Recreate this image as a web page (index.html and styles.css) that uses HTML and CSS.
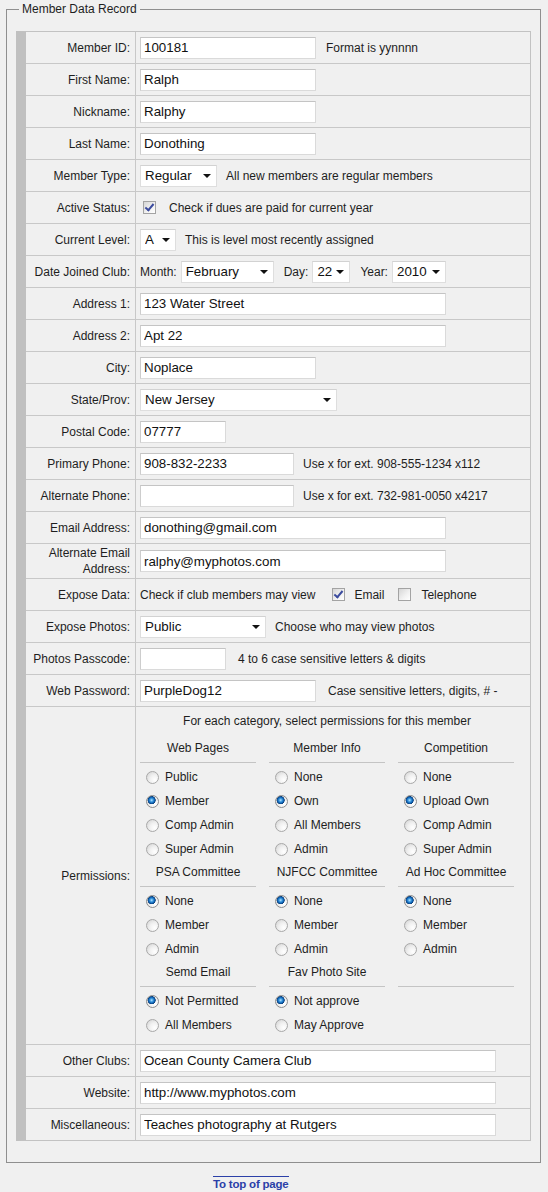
FILE: index.html
```html
<!DOCTYPE html>
<html lang="en">
<head>
<meta charset="utf-8">
<title>Member Data Record</title>
<link rel="stylesheet" href="styles.css">
</head>
<body>
<form class="page">
  <fieldset class="record">
    <legend>Member Data Record</legend>
    <div class="grid">
      <div class="row"><div class="lbl">Member ID:</div><div class="val"><input class="txt w176" value="100181"><span class="hint m10">Format is yynnnn</span></div></div>
      <div class="row"><div class="lbl">First Name:</div><div class="val"><input class="txt w176" value="Ralph"></div></div>
      <div class="row"><div class="lbl">Nickname:</div><div class="val"><input class="txt w176" value="Ralphy"></div></div>
      <div class="row"><div class="lbl">Last Name:</div><div class="val"><input class="txt w176" value="Donothing"></div></div>
      <div class="row"><div class="lbl">Member Type:</div><div class="val"><span class="sel w77"><select><option>Regular</option></select></span><span class="hint m9">All new members are regular members</span></div></div>
      <div class="row"><div class="lbl">Active Status:</div><div class="val"><input type="checkbox" class="chk m3" checked><span class="hint m13">Check if dues are paid for current year</span></div></div>
      <div class="row"><div class="lbl">Current Level:</div><div class="val"><span class="sel w36"><select><option>A</option></select></span><span class="hint m9">This is level most recently assigned</span></div></div>
      <div class="row"><div class="lbl">Date Joined Club:</div><div class="val"><span class="hint">Month:</span><span class="sel w93 m4"><select><option>February</option></select></span><span class="hint m10">Day:</span><span class="sel w38 m4"><select><option>22</option></select></span><span class="hint m10">Year:</span><span class="sel w54 m4"><select><option>2010</option></select></span></div></div>
      <div class="row"><div class="lbl">Address 1:</div><div class="val"><input class="txt w306" value="123 Water Street"></div></div>
      <div class="row"><div class="lbl">Address 2:</div><div class="val"><input class="txt w306" value="Apt 22"></div></div>
      <div class="row"><div class="lbl">City:</div><div class="val"><input class="txt w176" value="Noplace"></div></div>
      <div class="row"><div class="lbl">State/Prov:</div><div class="val"><span class="sel w197"><select><option>New Jersey</option></select></span></div></div>
      <div class="row"><div class="lbl">Postal Code:</div><div class="val"><input class="txt w86" value="07777"></div></div>
      <div class="row"><div class="lbl">Primary Phone:</div><div class="val"><input class="txt w154" value="908-832-2233"><span class="hint m9">Use x for ext. 908-555-1234 x112</span></div></div>
      <div class="row"><div class="lbl">Alternate Phone:</div><div class="val"><input class="txt w154" value=""><span class="hint m9">Use x for ext. 732-981-0050 x4217</span></div></div>
      <div class="row"><div class="lbl">Email Address:</div><div class="val"><input class="txt w306" value="donothing@gmail.com"></div></div>
      <div class="row"><div class="lbl two">Alternate Email<br>Address:</div><div class="val"><input class="txt w306" value="ralphy@myphotos.com"></div></div>
      <div class="row"><div class="lbl">Expose Data:</div><div class="val"><span class="hint">Check if club members may view</span><input type="checkbox" class="chk m17" checked><span class="hint m9">Email</span><input type="checkbox" class="chk m14"><span class="hint m10">Telephone</span></div></div>
      <div class="row"><div class="lbl">Expose Photos:</div><div class="val"><span class="sel w126"><select><option>Public</option></select></span><span class="hint m9">Choose who may view photos</span></div></div>
      <div class="row"><div class="lbl">Photos Passcode:</div><div class="val"><input class="txt w86" value=""><span class="hint m12">4 to 6 case sensitive letters &amp; digits</span></div></div>
      <div class="row"><div class="lbl">Web Password:</div><div class="val"><input class="txt w176" value="PurpleDog12"><span class="hint m12">Case sensitive letters, digits, # -</span></div></div>
      <div class="row"><div class="lbl">Permissions:</div>
        <div class="perm">
          <div class="intro">For each category, select permissions for this member</div>
          <div class="pgrid">
            <div class="group"><div class="ghead">Web Pages</div>
              <label class="opt"><input type="radio" name="web" class="rad">Public</label>
              <label class="opt"><input type="radio" name="web" class="rad" checked>Member</label>
              <label class="opt"><input type="radio" name="web" class="rad">Comp Admin</label>
              <label class="opt"><input type="radio" name="web" class="rad">Super Admin</label>
            </div>
            <div class="group"><div class="ghead">Member Info</div>
              <label class="opt"><input type="radio" name="info" class="rad">None</label>
              <label class="opt"><input type="radio" name="info" class="rad" checked>Own</label>
              <label class="opt"><input type="radio" name="info" class="rad">All Members</label>
              <label class="opt"><input type="radio" name="info" class="rad">Admin</label>
            </div>
            <div class="group"><div class="ghead">Competition</div>
              <label class="opt"><input type="radio" name="comp" class="rad">None</label>
              <label class="opt"><input type="radio" name="comp" class="rad" checked>Upload Own</label>
              <label class="opt"><input type="radio" name="comp" class="rad">Comp Admin</label>
              <label class="opt"><input type="radio" name="comp" class="rad">Super Admin</label>
            </div>
            <div class="group"><div class="ghead">PSA Committee</div>
              <label class="opt"><input type="radio" name="psa" class="rad" checked>None</label>
              <label class="opt"><input type="radio" name="psa" class="rad">Member</label>
              <label class="opt"><input type="radio" name="psa" class="rad">Admin</label>
            </div>
            <div class="group"><div class="ghead">NJFCC Committee</div>
              <label class="opt"><input type="radio" name="njfcc" class="rad" checked>None</label>
              <label class="opt"><input type="radio" name="njfcc" class="rad">Member</label>
              <label class="opt"><input type="radio" name="njfcc" class="rad">Admin</label>
            </div>
            <div class="group"><div class="ghead">Ad Hoc Committee</div>
              <label class="opt"><input type="radio" name="adhoc" class="rad" checked>None</label>
              <label class="opt"><input type="radio" name="adhoc" class="rad">Member</label>
              <label class="opt"><input type="radio" name="adhoc" class="rad">Admin</label>
            </div>
            <div class="group"><div class="ghead">Semd Email</div>
              <label class="opt"><input type="radio" name="send" class="rad" checked>Not Permitted</label>
              <label class="opt"><input type="radio" name="send" class="rad">All Members</label>
            </div>
            <div class="group"><div class="ghead">Fav Photo Site</div>
              <label class="opt"><input type="radio" name="fav" class="rad" checked>Not approve</label>
              <label class="opt"><input type="radio" name="fav" class="rad">May Approve</label>
            </div>
            <div class="group"><div class="ghead">&nbsp;</div></div>
          </div>
        </div>
      </div>
      <div class="row"><div class="lbl">Other Clubs:</div><div class="val"><input class="txt w356" value="Ocean County Camera Club"></div></div>
      <div class="row"><div class="lbl">Website:</div><div class="val"><input class="txt w356" value="http://www.myphotos.com"></div></div>
      <div class="row"><div class="lbl">Miscellaneous:</div><div class="val"><input class="txt w356" value="Teaches photography at Rutgers"></div></div>
    </div>
  </fieldset>
  <div class="totop"><a href="#">To top of page</a></div>
</form>
</body>
</html>
```

FILE: styles.css
```css
html, body {
  margin: 0;
  padding: 0;
  background: #f0f0f0;
}
body {
  font-family: "Liberation Sans", Arial, sans-serif;
  font-size: 12px;
  color: #1e1e1e;
}
.page {
  margin: 0;
  padding: 0;
}
.record {
  margin: 2px 7px 0 6px;
  padding: 15px 9px 21px 9px;
  border: 1px solid #8f8f8f;
  min-width: 0;
}
.record legend {
  margin-left: 3px;
  padding: 0 3px;
  line-height: 14px;
  font-size: 12px;
  color: #1e1e1e;
}
.grid {
  border: 1px solid #c2c2c2;
  border-left: 10px solid #c0c0c0;
}
.row {
  display: grid;
  grid-template-columns: 110px 1fr;
  border-top: 1px solid #c8c8c8;
}
.row:first-child {
  border-top: 0;
}
.lbl {
  box-sizing: border-box;
  border-right: 1px solid #c8c8c8;
  padding: 0 5px 0 0;
  min-height: 31px;
  display: flex;
  align-items: center;
  justify-content: flex-end;
  text-align: right;
  line-height: 16px;
  white-space: nowrap;
}
.lbl.two {
  padding-top: 1px;
  padding-bottom: 1px;
  min-height: 34px;
}
.val {
  display: flex;
  align-items: center;
  padding: 0 4px;
  min-height: 31px;
  white-space: nowrap;
}
.txt {
  box-sizing: border-box;
  height: 22px;
  margin: 0;
  padding: 0 3px;
  border: 1px solid #dadada;
  border-top-color: #c4c4c4;
  border-left-color: #cdcdcd;
  background: #fff;
  font-family: "Liberation Sans", Arial, sans-serif;
  font-size: 13.33px;
  color: #111;
  outline: none;
}
.hint {
  line-height: 16px;
  color: #1e1e1e;
}
.sel {
  position: relative;
  display: inline-block;
  height: 22px;
}
.sel select {
  -webkit-appearance: none;
  appearance: none;
  box-sizing: border-box;
  width: 100%;
  height: 22px;
  margin: 0;
  padding: 0 0 0 4px;
  border: 1px solid #dedede;
  border-top-color: #d2d2d2;
  border-radius: 0;
  background: #fff;
  font-family: "Liberation Sans", Arial, sans-serif;
  font-size: 13.33px;
  color: #111;
  outline: none;
}
.sel::after {
  content: "";
  position: absolute;
  right: 6px;
  top: 9px;
  border-left: 4px solid transparent;
  border-right: 4px solid transparent;
  border-top: 4px solid #111;
  pointer-events: none;
}
.chk {
  -webkit-appearance: none;
  appearance: none;
  position: relative;
  box-sizing: border-box;
  width: 13px;
  height: 13px;
  margin: 0;
  border: 1px solid #a3a3a3;
  background: linear-gradient(135deg, #d6d6d6 0%, #f2f2f2 60%, #ffffff 100%);
  flex: none;
}
.chk:checked::after {
  content: "";
  position: absolute;
  left: 3px;
  top: 0px;
  width: 3px;
  height: 7px;
  border-right: 2px solid #3b4b9e;
  border-bottom: 2px solid #3b4b9e;
  transform: rotate(40deg);
}
.perm {
  padding: 6px 4px 7px 4px;
}
.intro {
  line-height: 16px;
  text-align: center;
  width: 374px;
  margin-bottom: 8px;
}
.pgrid {
  display: grid;
  grid-template-columns: 116px 116px 116px;
  column-gap: 13px;
}
.ghead {
  padding: 3px 0 6px 0;
  line-height: 16px;
  text-align: center;
  border-bottom: 1px solid #c4c4c4;
  margin-bottom: 2px;
}
.opt {
  display: flex;
  align-items: center;
  height: 24px;
  padding-left: 6px;
  line-height: 16px;
}
.rad {
  -webkit-appearance: none;
  appearance: none;
  box-sizing: border-box;
  width: 13px;
  height: 13px;
  margin: 0 6px 0 0;
  border-radius: 50%;
  border: 1px solid #a8a8a8;
  background: radial-gradient(circle at 70% 70%, #ffffff 0%, #f0f0f0 45%, #cfcfcf 100%);
  flex: none;
}
.rad:checked {
  border-color: #8c8c8c;
  background:
    radial-gradient(circle at 42% 38%, #b9e3ff 0px, #3d9be0 1.6px, #0d5fb0 3px, #0a3f7a 3.8px, rgba(10,63,122,0) 4.3px),
    radial-gradient(circle at 70% 70%, #ffffff 0%, #f0f0f0 45%, #cfcfcf 100%);
}
.totop {
  padding: 13px 0 0 213px;
}
.totop a {
  display: inline-block;
  border-top: 1px solid #2b40a8;
  padding-top: 1px;
  font-family: "Liberation Sans", Arial, sans-serif;
  font-weight: bold;
  font-size: 11.5px;
  line-height: 13px;
  color: #2b40a8;
  text-decoration: none;
  letter-spacing: -0.2px;
}

/* widths */
.w36 { width: 36px; }
.w38 { width: 38px; }
.w54 { width: 54px; }
.w77 { width: 77px; }
.w86 { width: 86px; }
.w93 { width: 93px; }
.w126 { width: 126px; }
.w154 { width: 154px; }
.w176 { width: 176px; }
.w197 { width: 197px; }
.w306 { width: 306px; }
.w356 { width: 356px; }

/* spacing helpers (declared last so they win over component margins) */
.m3 { margin-left: 3px; }
.m4 { margin-left: 4px; }
.m9 { margin-left: 9px; }
.m10 { margin-left: 10px; }
.m12 { margin-left: 12px; }
.m13 { margin-left: 13px; }
.m14 { margin-left: 14px; }
.m17 { margin-left: 17px; }
```
